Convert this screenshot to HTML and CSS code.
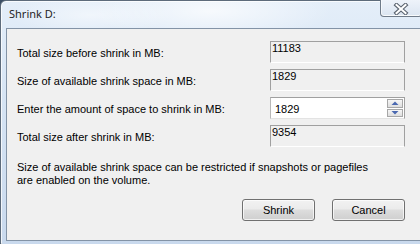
FILE: index.html
```html
<!DOCTYPE html>
<html>
<head>
<meta charset="utf-8">
<link rel="stylesheet" href="styles.css">
</head>
<body>
<div class="window">
  <div class="titlebar">
    <span class="title">Shrink D:</span>
    <div class="close">
      <svg width="18" height="12" viewBox="0 0 18 12">
        <path d="M4.5 2 L13.5 10 M13.5 2 L4.5 10" stroke="#5b6470" stroke-width="4.2" stroke-linecap="square" fill="none"/>
        <path d="M4.5 2 L13.5 10 M13.5 2 L4.5 10" stroke="#ffffff" stroke-width="2" stroke-linecap="square" fill="none"/>
      </svg>
    </div>
  </div>
  <div class="client">
    <div class="rows">
      <div class="label">Total size before shrink in MB:</div>
      <div class="field ro">11183</div>
      <div class="label">Size of available shrink space in MB:</div>
      <div class="field ro">1829</div>
      <div class="label">Enter the amount of space to shrink in MB:</div>
      <div class="field spin">
        <span class="spin-text">1829</span>
        <div class="spin-btns">
          <div class="sbtn"><svg width="8" height="4" viewBox="0 0 8 4"><path d="M0.5 4 L4 0.5 L7.5 4 Z" fill="#4a68b0"/></svg></div>
          <div class="sbtn"><svg width="8" height="4" viewBox="0 0 8 4"><path d="M0.5 0 L4 3.5 L7.5 0 Z" fill="#4a68b0"/></svg></div>
        </div>
      </div>
      <div class="label">Total size after shrink in MB:</div>
      <div class="field ro">9354</div>
    </div>
    <p class="note">Size of available shrink space can be restricted if snapshots or pagefiles<br>are enabled on the volume.</p>
    <div class="buttons">
      <div class="btn">Shrink</div>
      <div class="btn">Cancel</div>
    </div>
  </div>
</div>
</body>
</html>
```
FILE: styles.css
```css
html, body {
  margin: 0;
  padding: 0;
}
body {
  width: 420px;
  height: 244px;
  background: linear-gradient(to bottom, #3c4f66, #1f2c3c);
  overflow: hidden;
  font-family: "Liberation Sans", Arial, sans-serif;
  font-size: 11px;
  color: #000;
}
.window {
  width: 416px;
  height: 240px;
  border: 1px solid #5d6b7b;
  border-radius: 6px 6px 4px 4px;
  background:
    radial-gradient(ellipse 120px 30px at 210px 10px, rgba(255,255,255,0.7), rgba(255,255,255,0) 100%),
    radial-gradient(ellipse 80px 20px at 90px 14px, rgba(255,255,255,0.5), rgba(255,255,255,0) 100%),
    linear-gradient(to bottom, #e4eef9 0%, #d6e4f4 40%, #c9d9ed 100%);
  box-shadow: inset 0 0 0 1px rgba(255,255,255,0.75);
  display: flex;
  flex-direction: column;
  padding: 0 4px 5px 5px;
}
.titlebar {
  height: 27px;
  display: flex;
  justify-content: space-between;
  align-items: flex-start;
}
.title {
  font-family: "Noto Sans", "Liberation Sans", sans-serif;
  font-size: 11px;
  color: #1e1e1e;
  padding: 5px 0 0 3px;
  line-height: 16px;
}
.close {
  width: 40px;
  height: 16px;
  margin-top: -1px;
  border: 1px solid #6f7b89;
  border-top: none;
  border-radius: 0 0 4px 4px;
  background: linear-gradient(to bottom, #eef3fa, #dbe5f1);
  box-shadow: inset 0 -1px 0 rgba(255,255,255,0.8), inset 1px 0 0 rgba(255,255,255,0.6), inset -1px 0 0 rgba(255,255,255,0.6);
  display: flex;
  align-items: center;
  justify-content: center;
}
.close svg { display: block; margin-top: 1px; }
.client {
  flex: 1;
  border: 1px solid #8393a6;
  background: #f0f0f0;
  display: flex;
  flex-direction: column;
  padding: 12px 16px 0 10px;
}
.rows {
  display: grid;
  grid-template-columns: 1fr 135px;
  grid-auto-rows: 22px;
  row-gap: 6px;
}
.label {
  display: flex;
  align-items: center;
  padding-top: 1px;
}
.field {
  box-sizing: border-box;
  height: 22px;
}
.ro {
  border: 1px solid #a0a0a0;
  border-bottom-color: #ffffff;
  background: #f0f0f0;
  padding: 1px 0 0 1px;
  line-height: 11px;
}
.spin {
  border: 1px solid #a0a0a0;
  border-left-color: #b8b8b8;
  border-bottom-color: #e3e3e3;
  background: #fff;
  display: flex;
  align-items: center;
  justify-content: space-between;
  padding: 1px 1px 1px 4px;
}
.spin-text {
  padding-top: 1px;
}
.spin-btns {
  display: flex;
  flex-direction: column;
  gap: 1px;
  height: 18px;
}
.sbtn {
  box-sizing: border-box;
  width: 16px;
  height: 9px;
  border: 1px solid #a7a7a7;
  background: linear-gradient(to bottom, #f6f6f6, #dedede);
  display: flex;
  align-items: center;
  justify-content: center;
}
.sbtn svg { display: block; }
.note {
  margin: 14px 0 0 0;
  line-height: 13px;
}
.buttons {
  display: flex;
  justify-content: flex-end;
  gap: 17px;
  margin-top: 12px;
}
.btn {
  box-sizing: border-box;
  width: 73px;
  height: 22px;
  border: 1px solid #707070;
  border-radius: 3px;
  background: linear-gradient(to bottom, #f2f2f2 0%, #ebebeb 45%, #dddddd 50%, #cfcfcf 100%);
  box-shadow: inset 0 0 0 1px rgba(255,255,255,0.7);
  display: flex;
  align-items: center;
  justify-content: center;
}
```
